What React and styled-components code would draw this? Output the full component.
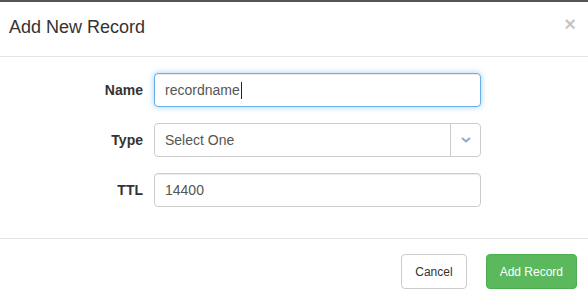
import React from "react";
import styled, { createGlobalStyle } from "styled-components";

const GlobalStyle = createGlobalStyle`
  html, body {
    margin: 0;
    padding: 0;
    background: #fff;
  }
  body {
    font-family: "Liberation Sans", Arial, sans-serif;
    color: #333;
  }
  * {
    box-sizing: border-box;
  }
`;

const Modal = styled.div`
  width: 588px;
  height: 300px;
  background: #fff;
  border-top: 2px solid #555;
  overflow: hidden;
`;

const Header = styled.div`
  display: flex;
  justify-content: space-between;
  align-items: center;
  padding: 15px 12px 19px 9px;
  border-bottom: 1px solid #e5e5e5;
`;

const Title = styled.h4`
  margin: 0;
  font-size: 18px;
  line-height: 20px;
  font-weight: normal;
  color: #333;
`;

const Close = styled.button`
  border: 0;
  background: none;
  padding: 0;
  margin: -6px 0 0 0;
  font-family: "Liberation Sans", Arial, sans-serif;
  font-size: 20px;
  font-weight: bold;
  line-height: 1;
  color: #000;
  opacity: 0.22;
  cursor: pointer;
`;

const Body = styled.form`
  display: grid;
  grid-template-columns: 143px 327px;
  column-gap: 11px;
  row-gap: 16px;
  padding: 16px 0 31px 0;
`;

const Label = styled.label`
  text-align: right;
  align-self: center;
  font-size: 14px;
  font-weight: bold;
  color: #333;
`;

const Field = styled.div`
  display: flex;
  align-items: center;
  height: 34px;
  padding: 0 10px;
  font-size: 14px;
  color: #555;
  background: #fff;
  border: 1px solid ${(p) => (p.$focused ? "#66afe9" : "#ccc")};
  border-radius: 4px;
  box-shadow: ${(p) =>
    p.$focused
      ? "inset 0 1px 1px rgba(0,0,0,.075), 0 0 6px rgba(102,175,233,.6)"
      : "inset 0 1px 1px rgba(0,0,0,.075)"};
`;

const Caret = styled.span`
  display: inline-block;
  width: 1px;
  height: 17px;
  margin-left: 1px;
  background: #222;
`;

const Input = styled.input`
  height: 34px;
  width: 100%;
  padding: 0 10px;
  font-family: "Liberation Sans", Arial, sans-serif;
  font-size: 14px;
  color: #555;
  background: #fff;
  border: 1px solid #ccc;
  border-radius: 4px;
  box-shadow: inset 0 1px 1px rgba(0,0,0,.075);
  outline: none;
`;

const Select = styled.div`
  display: flex;
  height: 34px;
  font-size: 14px;
  color: #555;
  border: 1px solid #ccc;
  border-radius: 4px;
  background: #fff;
`;

const SelectValue = styled.div`
  flex: 1;
  display: flex;
  align-items: center;
  padding: 0 10px;
`;

const SelectArrow = styled.div`
  width: 30px;
  display: flex;
  align-items: center;
  justify-content: center;
  border-left: 1px solid #ccc;
`;

const Footer = styled.div`
  display: flex;
  justify-content: flex-end;
  gap: 19px;
  padding: 15px 11px 11px 0;
  border-top: 1px solid #e5e5e5;
`;

const Button = styled.button`
  height: 35px;
  padding: 0 13px;
  font-family: "Liberation Sans", Arial, sans-serif;
  font-size: 12px;
  border-radius: 4px;
  cursor: pointer;
  color: ${(p) => (p.$primary ? "#fff" : "#333")};
  background: ${(p) => (p.$primary ? "#5cb85c" : "#fff")};
  border: 1px solid ${(p) => (p.$primary ? "#4cae4c" : "#ccc")};
`;

export default function App() {
  return (
    <>
      <GlobalStyle />
      <Modal>
        <Header>
          <Title>Add New Record</Title>
          <Close type="button">×</Close>
        </Header>
        <Body>
          <Label>Name</Label>
          <Field $focused>
            recordname
            <Caret />
          </Field>
          <Label>Type</Label>
          <Select>
            <SelectValue>Select One</SelectValue>
            <SelectArrow>
              <svg width="10" height="6" viewBox="0 0 10 6">
                <path d="M1 1 L5 4.5 L9 1" fill="none" stroke="#8aaad4" strokeWidth="2" />
              </svg>
            </SelectArrow>
          </Select>
          <Label>TTL</Label>
          <Input defaultValue="14400" />
        </Body>
        <Footer>
          <Button type="button">Cancel</Button>
          <Button type="button" $primary>Add Record</Button>
        </Footer>
      </Modal>
    </>
  );
}
